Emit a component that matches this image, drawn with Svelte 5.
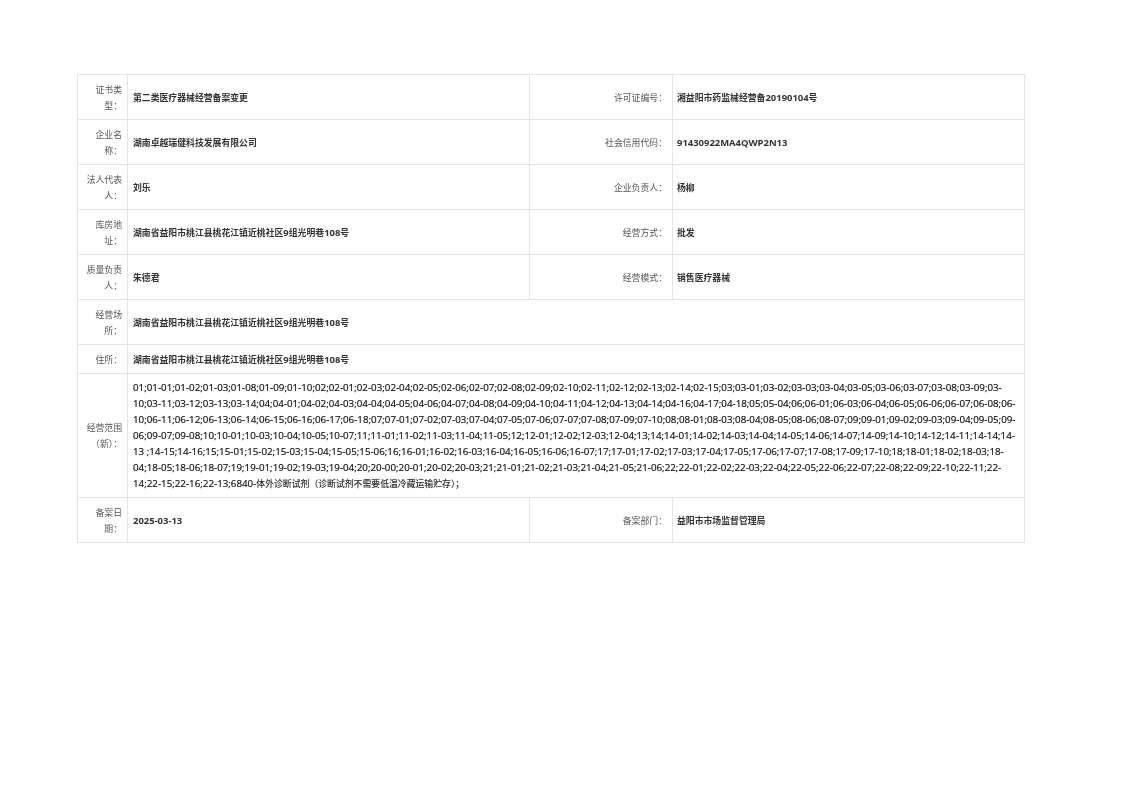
<script>
  const addr = '湖南省益阳市桃江县桃花江镇近桃社区9组光明巷108号';
  const top = [
    ['证书类型：', '第二类医疗器械经营备案变更', '许可证编号：', '湘益阳市药监械经营备20190104号'],
    ['企业名称：', '湖南卓越瑞健科技发展有限公司', '社会信用代码：', '91430922MA4QWP2N13'],
    ['法人代表人：', '刘乐', '企业负责人：', '杨柳'],
    ['库房地址：', addr, '经营方式：', '批发'],
    ['质量负责人：', '朱德君', '经营模式：', '销售医疗器械']
  ];
  const scope = [
    '01;01-01;01-02;01-03;01-08;01-09;01-10;02;02-01;02-03;02-04;02-05;02-06;02-07;02-08;02-09;02-10;02-11;02-12;02-13;02-14;02-15;03;03-01;03-02;03-03;03-04;03-05;03-06;03-07;03-08;03-09;03-',
    '10;03-11;03-12;03-13;03-14;04;04-01;04-02;04-03;04-04;04-05;04-06;04-07;04-08;04-09;04-10;04-11;04-12;04-13;04-14;04-16;04-17;04-18;05;05-04;06;06-01;06-03;06-04;06-05;06-06;06-07;06-08;06-',
    '10;06-11;06-12;06-13;06-14;06-15;06-16;06-17;06-18;07;07-01;07-02;07-03;07-04;07-05;07-06;07-07;07-08;07-09;07-10;08;08-01;08-03;08-04;08-05;08-06;08-07;09;09-01;09-02;09-03;09-04;09-05;09-',
    '06;09-07;09-08;10;10-01;10-03;10-04;10-05;10-07;11;11-01;11-02;11-03;11-04;11-05;12;12-01;12-02;12-03;12-04;13;14;14-01;14-02;14-03;14-04;14-05;14-06;14-07;14-09;14-10;14-12;14-11;14-14;14-',
    '13 ;14-15;14-16;15;15-01;15-02;15-03;15-04;15-05;15-06;16;16-01;16-02;16-03;16-04;16-05;16-06;16-07;17;17-01;17-02;17-03;17-04;17-05;17-06;17-07;17-08;17-09;17-10;18;18-01;18-02;18-03;18-',
    '04;18-05;18-06;18-07;19;19-01;19-02;19-03;19-04;20;20-00;20-01;20-02;20-03;21;21-01;21-02;21-03;21-04;21-05;21-06;22;22-01;22-02;22-03;22-04;22-05;22-06;22-07;22-08;22-09;22-10;22-11;22-',
    '14;22-15;22-16;22-13;6840-体外诊断试剂（诊断试剂不需要低温冷藏运输贮存）；'
  ];
  // Latin runs are set a little larger than the CJK around them, as in the original face.
  const parts = (s) => s.match(/[\x00-\x7f]+|[^\x00-\x7f]+/g).map((t) => ({ t, latin: /^[\x00-\x7f]/.test(t) }));
</script>

{#snippet mixed(s)}{#each parts(s) as p}{#if p.latin}<span class="num">{p.t}</span>{:else}{p.t}{/if}{/each}{/snippet}

<main class="page">
  <table>
    <colgroup>
      <col class="c1" /><col class="c2" /><col class="c3" /><col class="c4" />
    </colgroup>
    <tbody>
      {#each top as r}
        <tr class="tall">
          <th>{r[0]}</th><td>{@render mixed(r[1])}</td><th>{r[2]}</th><td class="last">{@render mixed(r[3])}</td>
        </tr>
      {/each}
      <tr class="tall"><th>经营场所：</th><td colspan="3">{@render mixed(addr)}</td></tr>
      <tr class="short"><th>住所：</th><td colspan="3">{@render mixed(addr)}</td></tr>
      <tr>
        <th>经营范围（新）：</th>
        <td colspan="3" class="scope">
          {#each scope as line}<div class="line">{@render mixed(line)}</div>{/each}
        </td>
      </tr>
      <tr class="tall">
        <th>备案日期：</th><td>{@render mixed('2025-03-13')}</td><th>备案部门：</th><td class="last">益阳市市场监督管理局</td>
      </tr>
    </tbody>
  </table>
</main>

<style>
  :global(body) {
    margin: 0;
    background: #fff;
  }
  .page {
    padding: 74px 0 0 77px;
    font-family: "Open Sans", "Noto Sans CJK SC", sans-serif;
    font-size: 8.85px;
    line-height: 16px;
    filter: blur(0.45px);
  }
  table {
    width: 948px;
    table-layout: fixed;
    border-collapse: collapse;
    border: 1px solid #e4e4e4;
  }
  .c1 { width: 50px; }
  .c2 { width: 402px; }
  .c3 { width: 143px; }
  th, td {
    border: 1px solid #e4e4e4;
    padding: 1px 5px 0;
    box-sizing: border-box;
  }
  th {
    font-weight: 400;
    color: #555;
    text-align: right;
  }
  td {
    font-weight: 700;
    color: #333;
    text-align: left;
  }
  .last { padding-left: 4px; }
  .num {
    font-size: 9.45px;
    font-weight: 700;
  }
  .tall { height: 45px; }
  .short { height: 29px; }
  .scope {
    height: 124px;
    font-weight: 500;
    color: #2b2b2b;
    white-space: pre;
  }
  .scope .num {
    font-size: 9.78px;
    font-weight: 500;
    color: #111;
    -webkit-text-stroke: 0.18px #111;
  }
  .line { height: 16px; }
</style>
